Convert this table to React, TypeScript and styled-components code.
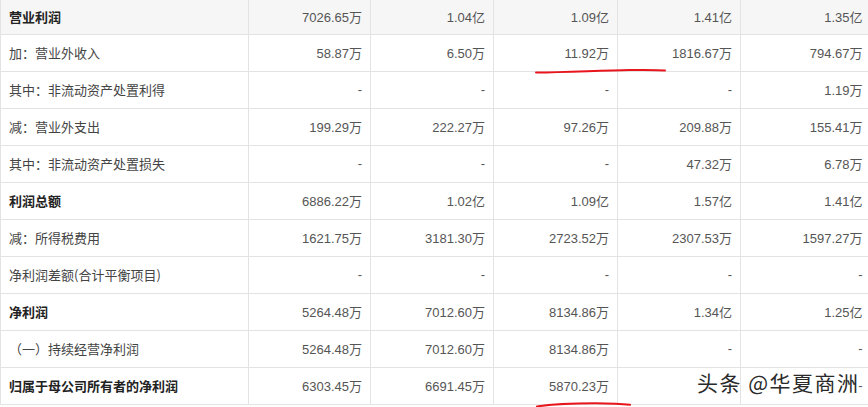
import * as React from 'react'
import styled, { createGlobalStyle } from 'styled-components'

type Row = {
  label: string
  values: string[]
  strong?: boolean
  shaded?: boolean
}

const rows: Row[] = [
  { label: '营业利润', values: ['7026.65万', '1.04亿', '1.09亿', '1.41亿', '1.35亿'], strong: true, shaded: true },
  { label: '加：营业外收入', values: ['58.87万', '6.50万', '11.92万', '1816.67万', '794.67万'] },
  { label: '其中：非流动资产处置利得', values: ['-', '-', '-', '-', '1.19万'] },
  { label: '减：营业外支出', values: ['199.29万', '222.27万', '97.26万', '209.88万', '155.41万'] },
  { label: '其中：非流动资产处置损失', values: ['-', '-', '-', '47.32万', '6.78万'] },
  { label: '利润总额', values: ['6886.22万', '1.02亿', '1.09亿', '1.57亿', '1.41亿'], strong: true },
  { label: '减：所得税费用', values: ['1621.75万', '3181.30万', '2723.52万', '2307.53万', '1597.27万'] },
  { label: '净利润差额(合计平衡项目)', values: ['-', '-', '-', '-', '-'] },
  { label: '净利润', values: ['5264.48万', '7012.60万', '8134.86万', '1.34亿', '1.25亿'], strong: true },
  { label: '（一）持续经营净利润', values: ['5264.48万', '7012.60万', '8134.86万', '-', '-'] },
  { label: '归属于母公司所有者的净利润', values: ['6303.45万', '6691.45万', '5870.23万', '-', '-'], strong: true },
]

// the last column is cut by the right edge of the capture
const colWidths = [248, 122, 123, 124, 123, 128]
const tableWidth = colWidths.reduce((a, b) => a + b, 0)

const App: React.FC = () => {
  return (
    <Page>
      <GlobalStyle />
      <Table style={{ width: tableWidth }}>
        <colgroup>
          {colWidths.map((w, i) => (
            <col key={i} style={{ width: w }} />
          ))}
        </colgroup>
        <tbody>
          {rows.map((row, i) => (
            <Line key={row.label} $shaded={row.shaded} $first={i === 0}>
              <Label $strong={row.strong}>{row.label}</Label>
              {row.values.map((v, j) => (
                <Value key={j}>{v}</Value>
              ))}
            </Line>
          ))}
        </tbody>
      </Table>

      {/* hand-drawn red underlines */}
      <Marks width='868' height='407' viewBox='0 0 868 407'>
        <path
          d='M536 72.5 C 570 72, 600 70.5, 630 70 C 645 69.8, 658 69.8, 665 70.5'
          stroke='#e8151d'
          strokeWidth='2'
          fill='none'
          strokeLinecap='round'
        />
        <path
          d='M537 406.5 C 550 404.5, 570 403.2, 595 403.2 C 612 403.2, 624 404, 630 404.8'
          stroke='#e8151d'
          strokeWidth='2'
          fill='none'
          strokeLinecap='round'
        />
      </Marks>

      <Watermark>头条 @华夏商洲</Watermark>
    </Page>
  )
}

export default App

const GlobalStyle = createGlobalStyle`
  html, body {
    margin: 0;
    padding: 0;
    background: #fff;
  }
`

const Page = styled.div`
  position: relative;
  width: 868px;
  height: 407px;
  overflow: hidden;
  font-family: 'Liberation Sans', 'Noto Sans CJK SC', sans-serif;
  font-size: 13px;
`

const Table = styled.table`
  border-collapse: collapse;
  table-layout: fixed;
  border-left: 1px solid #e3e3e3;
`

const Line = styled.tr<{ $shaded?: boolean; $first?: boolean }>`
  height: ${(p) => (p.$first ? 34 : 37)}px;
  background: ${(p) => (p.$shaded ? '#f6f6f6' : '#fff')};

  & > td {
    border-bottom: 1px solid #e3e3e3;
    border-right: 1px solid #e3e3e3;
    padding: 0 8px;
    vertical-align: middle;
    white-space: nowrap;
  }

  & > td:last-child {
    border-right: none;
    padding-right: 6px;
  }
`

const Label = styled.td<{ $strong?: boolean }>`
  text-align: left;
  font-family: 'Noto Sans CJK SC', sans-serif;
  font-weight: ${(p) => (p.$strong ? 700 : 400)};
  color: ${(p) => (p.$strong ? '#222' : '#444')};
`

const Value = styled.td`
  text-align: right;
  color: #555;
`

const Marks = styled.svg`
  position: absolute;
  left: 0;
  top: 0;
  pointer-events: none;
`

const Watermark = styled.div`
  position: absolute;
  left: 697px;
  top: 367px;
  font-family: 'Noto Sans CJK SC', sans-serif;
  font-size: 21px;
  letter-spacing: 1.5px;
  color: #2a2a2a;
  white-space: nowrap;
  text-shadow: 1px 1px 0 #fff, -1px -1px 0 #fff, 1px -1px 0 #fff, -1px 1px 0 #fff;
`
